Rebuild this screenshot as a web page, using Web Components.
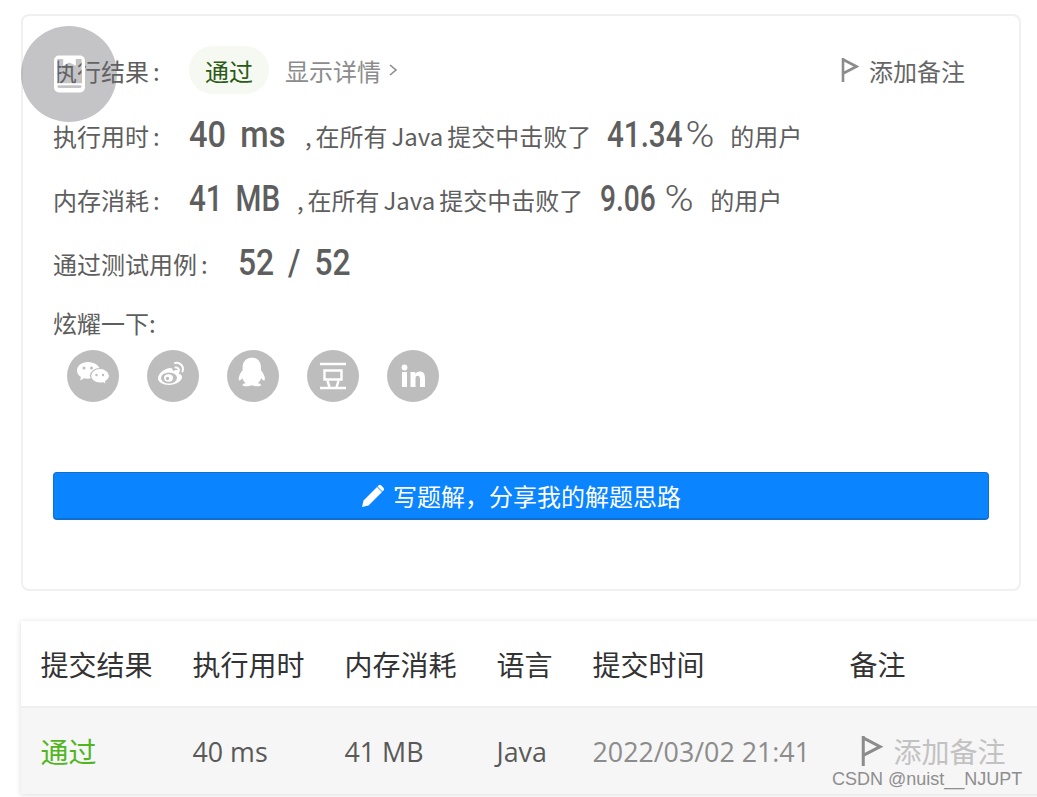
<!DOCTYPE html>
<html lang="zh">
<head>
<meta charset="utf-8">
<title>提交结果</title>
<style>
html, body { margin: 0; height: 100%; background: #fff; overflow: hidden; }
body {
  font-family: "Noto Sans CJK SC", "Liberation Sans", sans-serif;
  color: #5e5e5e;
}
</style>
</head>
<body>
<result-page>
  <float-badge></float-badge>
  <result-card>
    <result-head></result-head>
    <stat-row label="执行用时" label-width="136" value="40 ms" value-width="116" value-scale=".88" pct="41.34" pct-scale=".8" pct-sign="1.320" pct-sign-gap="4" pct-gap="16" pct-width="123"></stat-row>
    <stat-row label="内存消耗" label-width="136" value="41 MB" value-width="108" value-scale=".8" pct="9.06" pct-scale=".76" pct-sign="1.400" pct-sign-gap="12" pct-gap="17" pct-width="110"></stat-row>
    <stat-row label="通过测试用例" label-width="185" value="52 / 52" value-width="120" value-scale=".86"></stat-row>
    <share-bar></share-bar>
    <write-button>写题解，分享我的解题思路</write-button>
  </result-card>
  <submit-table></submit-table>
</result-page>
<water-mark>CSDN @nuist__NJUPT</water-mark>

<script>
'use strict';

const FLAG_PATH = 'M2 0v24M2 1.500l13.500 7L2 15.500';

class ResultPage extends HTMLElement {
  constructor() {
    super();
    this.attachShadow({mode: 'open'}).innerHTML = `
<style>
:host { display: block; position: relative; width: 1037px; height: 797px; overflow: hidden; }
.wrap { display: flex; flex-direction: column; padding: 14px 0 0 21px; gap: 30px; }
</style>
<div class="wrap"><slot></slot></div>`;
  }
}

class FloatBadge extends HTMLElement {
  constructor() {
    super();
    this.attachShadow({mode: 'open'}).innerHTML = `
<style>
:host {
  position: absolute; left: 21px; top: 26px; width: 96px; height: 96px;
  border-radius: 50%; background: rgba(107, 107, 112, .4);
  display: flex; align-items: center; justify-content: center; z-index: 2;
}
svg { display: block; margin: 0 0 1px 1px; }
</style>
<svg width="31" height="38" viewBox="0 0 32 38">
  <path fill="#fff" fill-rule="evenodd" d="M5 0h22a5 5 0 0 1 5 5v28a5 5 0 0 1-5 5H5a5 5 0 0 1-5-5V5a5 5 0 0 1 5-5zM3.500 3.500v25h25v-25h-6v7l-6.500-3.500-6.500 3.500v-7zM5 30.500a1.500 1.500 0 0 0 0 3h22a1.500 1.500 0 0 0 0-3z"/>
</svg>`;
  }
}

class ResultCard extends HTMLElement {
  constructor() {
    super();
    this.attachShadow({mode: 'open'}).innerHTML = `
<style>
:host {
  display: block; box-sizing: border-box; width: 1000px; height: 577px;
  border: 2px solid #f0f0f0; border-radius: 8px; background: #fff;
  padding: 30px 30px 0 30px;
}
</style>
<slot></slot>`;
  }
}

class ResultHead extends HTMLElement {
  constructor() {
    super();
    this.attachShadow({mode: 'open'}).innerHTML = `
<style>
:host { display: flex; align-items: center; height: 48px; margin-bottom: 20px; font-size: 24px; }
.label { width: 136px; flex: none; }
.colon { margin-left: 4px; }
.pill {
  height: 48px; width: 80px; border-radius: 24px; background: #f5f9f1; color: #2a5a16;
  display: flex; align-items: center; justify-content: center;
}
.more { margin-left: 16px; color: #8c8c8c; display: flex; align-items: center; gap: 7px; }
.note { margin-left: auto; margin-right: 24px; display: flex; align-items: center; gap: 10px; color: #666; }
svg { display: block; }
</style>
<span class="label">执行结果<span class="colon">:</span></span>
<span class="pill">通过</span>
<span class="more">显示详情<svg width="10" height="14" viewBox="0 0 10 14"><path d="M2 2l6 5-6 5" fill="none" stroke="#8c8c8c" stroke-width="1.600"/></svg></span>
<span class="note"><svg width="18" height="24" viewBox="0 0 18 24"><path d="${FLAG_PATH}" fill="none" stroke="#8c8c8c" stroke-width="2.600"/></svg>添加备注</span>`;
  }
}

class StatRow extends HTMLElement {
  constructor() {
    super();
    const root = this.attachShadow({mode: 'open'});
    const pct = this.getAttribute('pct');
    const rest = pct ? `
<span class="text">, 在所有 Java 提交中击败了</span>
<span class="slot" style="margin-left:${this.getAttribute('pct-gap')}px;width:${this.getAttribute('pct-width')}px"><span class="big" style="--s:${this.getAttribute('pct-scale')}">${pct}<span class="thin" style="--t:${this.getAttribute('pct-sign')};margin-left:${this.getAttribute('pct-sign-gap')}px">%</span></span></span>
<span class="text">的用户</span>` : '';
    root.innerHTML = `
<style>
:host { display: flex; align-items: baseline; height: 64px; font-size: 24px; white-space: nowrap; }
.label { flex: none; }
.colon { margin-left: 4px; }
.slot { display: inline-block; flex: none; }
.big {
  display: inline-block; transform: translateY(1px) scaleX(var(--s)); transform-origin: 0 50%;
  font-family: Roboto, "Liberation Sans", sans-serif; font-weight: 500; font-size: 37px;
  line-height: 40px; word-spacing: 7px;
}
.thin { display: inline-block; font-weight: 300; transform: scaleX(var(--t)); transform-origin: 0 50%; }
.text { word-spacing: -1.500px; }
</style>
<span class="label" style="width:${this.getAttribute('label-width')}px">${this.getAttribute('label')}<span class="colon">:</span></span>
<span class="slot" style="width:${this.getAttribute('value-width')}px"><span class="big" style="--s:${this.getAttribute('value-scale')}">${this.getAttribute('value')}</span></span>${rest}`;
  }
}

class ShareBar extends HTMLElement {
  constructor() {
    super();
    const grey = '#bdbdbd';
    const icons = [
      // wechat
      `<path d="M21 12c-6.500 0-11 3.800-11 8.500 0 2.700 1.500 5 4 6.500l-1 3.500 4-2.200c1.200.3 2.300.4 3.500.4 1.500 0 3-.2 4.300-.7C31 27 33 24 33 20.500 33 15.800 27.500 12 21 12z" fill="#fff"/>
       <circle cx="17" cy="18" r="1.500" fill="${grey}"/><circle cx="24.500" cy="18" r="1.500" fill="${grey}"/>
       <path d="M33 18.500c-5.200 0-9.500 3.300-9.500 7.300s4.300 7.300 9.500 7.300c1 0 2-.1 2.900-.4l3.600 2-1-3.300c2.300-1.400 4-3.300 4-5.600 0-4-4.300-7.300-9.500-7.300z" fill="#fff" stroke="${grey}" stroke-width="1.200"/>
       <circle cx="29.500" cy="25" r="1.200" fill="${grey}"/><circle cx="36" cy="25" r="1.200" fill="${grey}"/>`,
      // weibo
      `<path d="M22 18c-6 1.500-11 6-11 10.500 0 3.500 4.500 6.500 11 6.500 7 0 13-4 13-8 0-2-1.800-3-3.200-3.500.7-1.700.5-3-1-3.500-1.500-.4-3.500.3-5 1 .5-2.500-1.500-3.500-3.800-3z" fill="#fff"/>
       <ellipse cx="22" cy="28" rx="8" ry="5.500" fill="${grey}"/>
       <ellipse cx="21.500" cy="28" rx="4.500" ry="3.700" fill="#fff"/><circle cx="20.500" cy="28.500" r="1.700" fill="${grey}"/>
       <path d="M28 13c4.500-1 9.500 3 7.500 8.500M28.500 17.500c2-.5 4 1.500 3.300 3.800" fill="none" stroke="#fff" stroke-width="2" stroke-linecap="round"/>`,
      // qq
      `<g transform="translate(26 0) scale(1.220 1.060) translate(-26 -1)"><path d="M26 8c-5.500 0-8.500 4-8.500 9v3c-1.800 2.500-4 6.500-3 9.500.5 1 1.800-.3 2.800-2 .4 2 1.300 3.500 2.700 4.700-1.500.5-3 1.300-2.500 2.300.6.800 3.800.8 5.500.4.900-.4 1.500-.6 2-.6s1.100.2 2 .6c1.700.4 4.900.4 5.500-.4.500-1-1-1.800-2.500-2.300 1.400-1.200 2.300-2.700 2.700-4.700 1 1.700 2.300 3 2.800 2 1-3-1.200-7-3-9.500v-3c0-5-3-9-8.500-9z" fill="#fff"/></g>`,
      // douban
      `<path d="M13 14h26M17.500 20.500h17v9h-17zM20.500 31l2 6M31.500 31l-2 6M13 38h26" fill="none" stroke="#fff" stroke-width="2.400"/>`,
      // linkedin
      `<circle cx="17.500" cy="17.500" r="2.900" fill="#fff"/><path d="M15 22h5v15h-5zM23.500 22h4.700v2.100c.9-1.500 2.500-2.500 4.500-2.500 4 0 5.300 2.600 5.300 6.700V37h-5v-7.800c0-2-.6-3.400-2.300-3.400-1.900 0-2.200 1.500-2.200 3.400V37h-5z" fill="#fff"/>`
    ];
    const items = icons.map((body) => `<svg width="52" height="52" viewBox="0 0 52 52"><circle cx="26" cy="26" r="26" fill="${grey}"/>${body}</svg>`).join('');
    this.attachShadow({mode: 'open'}).innerHTML = `
<style>
:host { display: block; font-size: 24px; }
.title { height: 37px; line-height: 34px; }
.icons { display: flex; gap: 28px; padding: 7px 0 0 14px; }
svg { display: block; }
</style>
<div class="title">炫耀一下:</div>
<div class="icons">${items}</div>`;
  }
}

class WriteButton extends HTMLElement {
  constructor() {
    super();
    this.attachShadow({mode: 'open'}).innerHTML = `
<style>
:host {
  display: flex; align-items: center; justify-content: center; gap: 8px; box-sizing: border-box;
  height: 48px; width: 936px; margin-top: 70px;
  background: #0a84ff; border: 1px solid #0f6fd0; border-bottom-width: 2px; border-radius: 4px;
  color: #fff; font-size: 24px;
}
svg { display: block; }
</style>
<svg width="24" height="24" viewBox="0 0 24 24"><path fill="#fff" d="M1 23l1.500-6.500L16 3l5 5L7.500 21.500zM17.500 1.500a2 2 0 0 1 2.800 0l2.200 2.200a2 2 0 0 1 0 2.800L21.500 7.500l-5-5z"/></svg>
<slot></slot>`;
  }
}

class SubmitTable extends HTMLElement {
  constructor() {
    super();
    this.attachShadow({mode: 'open'}).innerHTML = `
<style>
:host {
  display: block; width: 1030px; background: #fff;
  box-shadow: 0 1px 6px rgba(0, 0, 0, .14);
}
.row {
  display: grid; grid-template-columns: 152px 152px 152px 96px 257px 1fr;
  padding-left: 19.500px; align-items: center;
}
.header { height: 85px; font-size: 28px; color: #333; border-bottom: 2px solid #efefef; }
.body { height: 86px; background: #f6f6f6; font-size: 26.800px; color: #595959; }
.num { font-family: "Open Sans", "Liberation Sans", sans-serif; }
.ok { color: #52b51f; font-size: 28px; }
.time { color: #8c8c8c; font-family: "Open Sans", "Liberation Sans", sans-serif; white-space: nowrap; }
.note { display: flex; align-items: center; gap: 10px; color: #c2c2c2; font-size: 28px; padding-left: 10px; }
svg { display: block; }
</style>
<div class="row header"><span>提交结果</span><span>执行用时</span><span>内存消耗</span><span>语言</span><span>提交时间</span><span>备注</span></div>
<div class="row body">
  <span class="ok">通过</span><span class="num">40 ms</span><span class="num">41 MB</span><span class="num">Java</span><span class="time">2022/03/02 21:41</span>
  <span class="note"><svg width="24" height="30" viewBox="0 0 18 24"><path d="${FLAG_PATH}" fill="none" stroke="#8c8c8c" stroke-width="2.400"/></svg>添加备注</span>
</div>`;
  }
}

class WaterMark extends HTMLElement {
  constructor() {
    super();
    this.attachShadow({mode: 'open'}).innerHTML = `
<style>
:host {
  position: absolute; left: 832px; top: 767px; z-index: 3;
  font: 18px/24px "Liberation Sans", sans-serif; color: #8e8e8e; white-space: nowrap;
}
</style>
<slot></slot>`;
  }
}

customElements.define('result-page', ResultPage);
customElements.define('float-badge', FloatBadge);
customElements.define('result-card', ResultCard);
customElements.define('result-head', ResultHead);
customElements.define('stat-row', StatRow);
customElements.define('share-bar', ShareBar);
customElements.define('write-button', WriteButton);
customElements.define('submit-table', SubmitTable);
customElements.define('water-mark', WaterMark);
</script>
</body>
</html>
